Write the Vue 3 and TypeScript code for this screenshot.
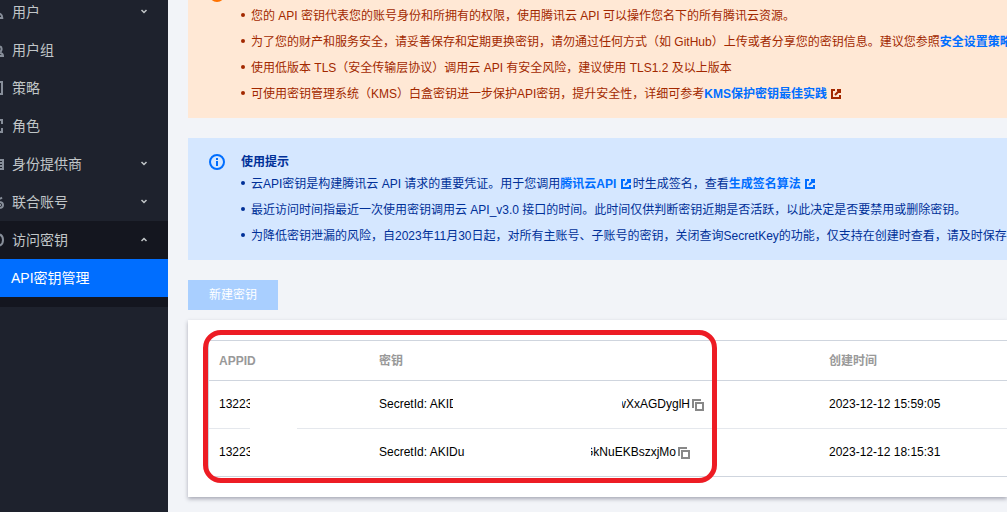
<script setup lang="ts">
type Arrow = 'down' | 'up' | ''

interface NavItem {
  label: string
  icon: string
  arrow: Arrow
}

interface KeyRow {
  appId: string
  head: string
  tail: string
  tailKind: string
  created: string
}

const navItems: NavItem[] = [
  { label: '用户', icon: 'M0 9.500Q2.300 11 2.300 14H0', arrow: 'down' },
  { label: '用户组', icon: 'M0 4.500q2 .5 1.500 3.500L.5 10M0 11q3 .5 3 3H0', arrow: '' },
  { label: '策略', icon: 'M0 2h2v12H0', arrow: '' },
  { label: '角色', icon: 'M0 2h2v4M2 10v4H0', arrow: '' },
  { label: '身份提供商', icon: 'M0 4h3v9H0M0 7h2M0 10h2', arrow: 'down' },
  { label: '联合账号', icon: 'M0 5l2-1.500M0 8q3 .5 3 3t-3 3M0 11h1', arrow: 'down' },
]

const rows: KeyRow[] = [
  { appId: '13223', head: 'SecretId: AKID', tail: 'wXxAGDyglH', tailKind: 'first', created: '2023-12-12 15:59:05' },
  { appId: '13223', head: 'SecretId: AKIDu', tail: 'GkNuEKBszxjMo', tailKind: 'second', created: '2023-12-12 18:15:31' },
]
</script>

<template>
  <div class="page">
    <nav class="sidebar">
      <a v-for="item in navItems" :key="item.label" href="#" class="nav-item">
        <svg class="nav-icon" width="4" height="16" viewBox="0 0 4 16"><path :d="item.icon" /></svg>
        <span class="nav-label">{{ item.label }}</span>
        <svg v-if="item.arrow" class="chevron" width="8" height="8" viewBox="0 0 8 8"><path d="M1.500 2L4 4.500 6.500 2" /></svg>
      </a>
      <div class="nav-group">
        <a href="#" class="nav-item">
          <svg class="nav-icon" width="4" height="16" viewBox="0 0 4 16"><path d="M0 2.500q3 1.500 3 5.500t-3 5.500" /></svg>
          <span class="nav-label">访问密钥</span>
          <svg class="chevron" width="8" height="8" viewBox="0 0 8 8"><path d="M1.500 5L4 2.500 6.500 5" /></svg>
        </a>
        <a href="#" class="nav-item current">API密钥管理</a>
      </div>
    </nav>

    <main class="content">
      <section class="alert warning">
        <svg class="alert-icon" width="16" height="16" viewBox="0 0 16 16"><circle cx="8" cy="8" r="7" /></svg>
        <ul class="tips">
          <li>您的 API 密钥代表您的账号身份和所拥有的权限，使用腾讯云 API 可以操作您名下的所有腾讯云资源。</li>
          <li>为了您的财产和服务安全，请妥善保存和定期更换密钥，请勿通过任何方式（如 GitHub）上传或者分享您的密钥信息。建议您参照<a href="#">安全设置策略</a></li>
          <li>使用低版本 TLS（安全传输层协议）调用云 API 有安全风险，建议使用 TLS1.2 及以上版本</li>
          <li>可使用密钥管理系统（KMS）白盒密钥进一步保护API密钥，提升安全性，详细可参考<a href="#">KMS保护密钥最佳实践</a> <svg class="ext" width="12" height="12" viewBox="0 0 12 12"><path d="M5 2H2v8h8V7M7 2h3v3M10 2L5 7" /></svg></li>
        </ul>
      </section>

      <section class="alert info">
        <svg class="alert-icon" width="16" height="16" viewBox="0 0 16 16"><circle cx="8" cy="8" r="7" /><path d="M8 4v2M8 7v5" /></svg>
        <div class="alert-body">
          <h2>使用提示</h2>
          <ul class="tips">
            <li>云API密钥是构建腾讯云 API 请求的重要凭证。用于您调用<a href="#">腾讯云API <svg class="ext" width="12" height="12" viewBox="0 0 12 12"><path d="M5 2H2v8h8V7M7 2h3v3M10 2L5 7" /></svg></a>&#8202;时生成签名，查看<a href="#">生成签名算法 <svg class="ext" width="12" height="12" viewBox="0 0 12 12"><path d="M5 2H2v8h8V7M7 2h3v3M10 2L5 7" /></svg></a></li>
            <li>最近访问时间指最近一次使用密钥调用云 API_v3.0 接口的时间。此时间仅供判断密钥近期是否活跃，以此决定是否要禁用或删除密钥。</li>
            <li>为降低密钥泄漏的风险，自2023年11月30日起，对所有主账号、子账号的密钥，关闭查询SecretKey的功能，仅支持在创建时查看，请及时保存</li>
          </ul>
        </div>
      </section>

      <button type="button" class="create" disabled>新建密钥</button>

      <section class="card">
        <table>
          <colgroup>
            <col class="col-app" />
            <col class="col-key" />
            <col />
          </colgroup>
          <thead>
            <tr><th>APPID</th><th>密钥</th><th>创建时间</th></tr>
          </thead>
          <tbody>
            <tr v-for="row in rows" :key="row.created">
              <td><span class="app-id">{{ row.appId }}</span></td>
              <td>
                <div class="key" :class="row.tailKind">
                  <span class="key-head">{{ row.head }}</span>
                  <span class="key-tail"><span>{{ row.tail }}</span></span>
                  <button type="button" class="copy" aria-label="复制">
                    <svg width="12" height="12" viewBox="0 0 12 12"><path d="M1 9V1h8M4 4h7v7H4z" /></svg>
                  </button>
                </div>
              </td>
              <td>{{ row.created }}</td>
            </tr>
          </tbody>
        </table>
        <div class="cover"></div>
        <div class="highlight"></div>
      </section>
    </main>
  </div>
</template>

<style>
body {
  margin: 0;
  background: #f2f4f8;
}
</style>

<style scoped>
.page {
  display: flex;
  min-height: 100vh;
  overflow: hidden;
  background: #f2f4f8;
  color: #000;
  font: 12px/18px "Liberation Sans", "Noto Sans CJK SC", sans-serif;
}
a {
  color: #006eff;
  text-decoration: none;
}
.sidebar {
  flex: none;
  width: 168px;
  margin-top: -7px;
  background: #1e222d;
}
.nav-item {
  display: flex;
  align-items: center;
  height: 38px;
  padding-right: 20px;
  color: #c1c6c8;
  font-size: 14px;
}
.nav-icon {
  margin-right: 8px;
  fill: none;
  stroke: #878e99;
  stroke-width: 2;
}
.nav-label {
  flex: 1;
}
.chevron {
  fill: none;
  stroke: #c1c6c8;
  stroke-width: 1.5;
}
.nav-group {
  padding-bottom: 10px;
  background: #14161f;
}
.nav-item.current {
  padding-left: 11px;
  background: #006eff;
  color: #fff;
}
.content {
  flex: 1;
  min-width: 0;
  padding-left: 20px;
}
.alert {
  display: flex;
  gap: 16px;
  padding: 15px 0 15px 21px;
  margin-bottom: 20px;
  overflow: hidden;
  white-space: nowrap;
}
.alert-icon {
  flex: none;
  fill: none;
  stroke-width: 2;
}
.warning {
  padding-top: 7px;
  background: #ffe8d5;
  color: #a22800;
}
.warning .alert-icon {
  margin-top: -21px;
  stroke: #ff7200;
}
.info {
  background: #d5e7ff;
  color: #003098;
}
.info .alert-icon {
  margin-top: 1px;
  stroke: #006eff;
}
h2 {
  margin: 0 0 4px;
  font-size: 12px;
  line-height: 18px;
}
.tips {
  display: grid;
  gap: 8px;
  margin: 0;
  padding: 0 0 0 10px;
  list-style: none;
}
.tips li {
  position: relative;
  height: 18px;
}
.tips li::before {
  content: "";
  position: absolute;
  left: -10px;
  top: 6px;
  width: 4px;
  height: 4px;
  border-radius: 50%;
  background: currentColor;
}
.tips a {
  font-weight: bold;
}
.ext {
  fill: none;
  stroke: currentColor;
  stroke-width: 2;
  vertical-align: -2px;
}
.create {
  display: block;
  height: 30px;
  padding: 0 21px;
  border: 0;
  background: #a9cfff;
  color: #fff;
  font: inherit;
}
.card {
  position: relative;
  margin-top: 10px;
  padding: 20px 0 20px 20px;
  background: #fff;
  box-shadow: 0 2px 4px rgba(54, 58, 80, 0.4);
}
table {
  width: 100%;
  table-layout: fixed;
  border-collapse: separate;
  border-spacing: 0;
  border: 1px solid #cfd5de;
  border-right: 0;
}
.col-app {
  width: 160px;
}
.col-key {
  width: 450px;
}
th,
td {
  height: 45px;
  padding: 0 10px 2px;
  border-bottom: 1px solid #e5e8ed;
  text-align: left;
}
th {
  height: 39px;
  padding-bottom: 0;
  border-color: #cfd5de;
  color: #999;
}
tbody tr:last-child td {
  border-bottom: 0;
}
.app-id {
  display: block;
  width: 31px;
  overflow: hidden;
}
.key {
  display: flex;
  align-items: center;
}
.key-head {
  width: 74px;
  overflow: hidden;
  white-space: nowrap;
}
.key-tail {
  display: flex;
  justify-content: flex-end;
  width: 68px;
  margin-left: 169px;
  overflow: hidden;
}
.second .key-head {
  width: 90px;
}
.second .key-tail {
  width: 85px;
  margin-left: 122px;
}
.copy {
  display: flex;
  margin-left: 2px;
  padding: 2px 0 0;
  border: 0;
  background: none;
}
.copy svg {
  fill: none;
  stroke: #888;
  stroke-width: 2;
}
.cover {
  position: absolute;
  left: 62px;
  top: 70px;
  width: 47px;
  height: 80px;
  background: #fff;
}
.highlight {
  position: absolute;
  left: 15px;
  top: 10px;
  width: 504px;
  height: 143px;
  border: 5px solid #ed1c24;
  border-radius: 18px;
  pointer-events: none;
}
</style>
